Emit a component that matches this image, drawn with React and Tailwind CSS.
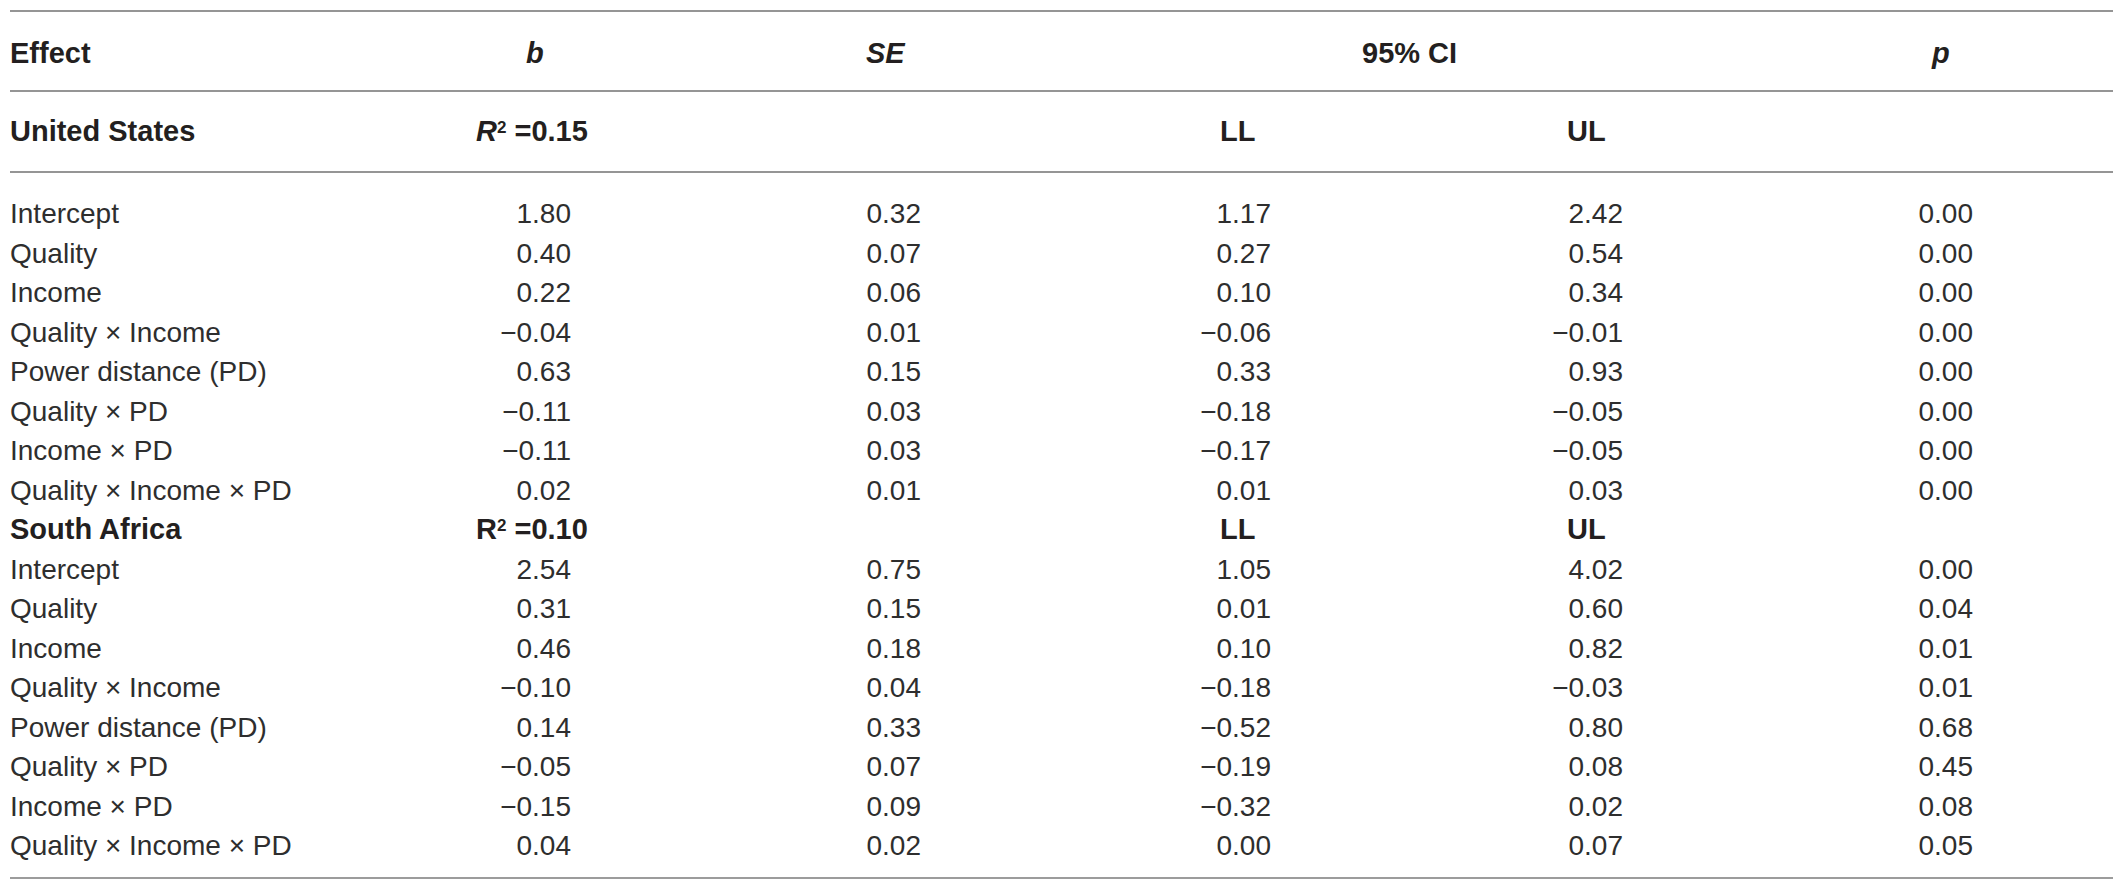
// Regression table: moderated effects by country
const COLS = "grid grid-cols-[411px_150px_350px_350px_352px_350px_140px]";

const US_ROWS = [
  ["Intercept", "1.80", "0.32", "1.17", "2.42", "0.00"],
  ["Quality", "0.40", "0.07", "0.27", "0.54", "0.00"],
  ["Income", "0.22", "0.06", "0.10", "0.34", "0.00"],
  ["Quality × Income", "−0.04", "0.01", "−0.06", "−0.01", "0.00"],
  ["Power distance (PD)", "0.63", "0.15", "0.33", "0.93", "0.00"],
  ["Quality × PD", "−0.11", "0.03", "−0.18", "−0.05", "0.00"],
  ["Income × PD", "−0.11", "0.03", "−0.17", "−0.05", "0.00"],
  ["Quality × Income × PD", "0.02", "0.01", "0.01", "0.03", "0.00"],
];

const SA_ROWS = [
  ["Intercept", "2.54", "0.75", "1.05", "4.02", "0.00"],
  ["Quality", "0.31", "0.15", "0.01", "0.60", "0.04"],
  ["Income", "0.46", "0.18", "0.10", "0.82", "0.01"],
  ["Quality × Income", "−0.10", "0.04", "−0.18", "−0.03", "0.01"],
  ["Power distance (PD)", "0.14", "0.33", "−0.52", "0.80", "0.68"],
  ["Quality × PD", "−0.05", "0.07", "−0.19", "0.08", "0.45"],
  ["Income × PD", "−0.15", "0.09", "−0.32", "0.02", "0.08"],
  ["Quality × Income × PD", "0.04", "0.02", "0.00", "0.07", "0.05"],
];

function DataRow({ row }) {
  const [label, ...nums] = row;
  return (
    <div className={`${COLS} h-[39.5px] leading-[39.5px] text-[28px] text-[#2e2e2e]`}>
      <div className="whitespace-nowrap">{label}</div>
      {nums.map((n, i) => (
        <div key={i} className="text-right whitespace-nowrap">
          {n}
        </div>
      ))}
      <div />
    </div>
  );
}

function RSquared({ value, italic }) {
  return (
    <span className="whitespace-nowrap">
      <span className={italic ? "italic" : ""}>R</span>
      <sup className="text-[17px]">2</sup> ={value}
    </span>
  );
}

export default function App() {
  return (
    <div className="min-h-screen bg-white pl-[10px] pt-[10px] font-['Liberation_Sans',Arial,sans-serif]">
      <div className="w-[2103px]">
        {/* column heads */}
        <div className={`${COLS} h-[82px] border-y-2 border-[#959595] text-[29px] font-bold text-[#231f20]`}>
          <div className="pt-[4px] leading-[74px]">Effect</div>
          <div className="pt-[4px] pl-[105px] leading-[74px] italic">b</div>
          <div className="pt-[4px] pl-[295px] leading-[74px] italic">SE</div>
          <div />
          <div className="pt-[4px] pl-[91px] leading-[74px] whitespace-nowrap">95% CI</div>
          <div className="pt-[4px] pl-[309px] leading-[74px] italic">p</div>
          <div />
        </div>

        {/* United States sub-head */}
        <div className={`${COLS} h-[81px] border-b-2 border-[#959595] text-[29px] font-bold text-[#231f20]`}>
          <div className="leading-[79px] whitespace-nowrap">United States</div>
          <div className="pl-[55px] leading-[79px]">
            <RSquared value="0.15" italic />
          </div>
          <div />
          <div className="pl-[299px] leading-[79px]">LL</div>
          <div className="pl-[296px] leading-[79px]">UL</div>
          <div />
          <div />
        </div>

        <div className="pt-[21px] pb-[11px] border-b-2 border-[#9c9c9c]">
          {US_ROWS.map((r) => (
            <DataRow key={"us" + r[0]} row={r} />
          ))}

          <div className={`${COLS} h-[39.5px] leading-[39.5px] text-[29px] font-bold text-[#231f20]`}>
            <div className="whitespace-nowrap">South Africa</div>
            <div className="pl-[55px]">
              <RSquared value="0.10" />
            </div>
            <div />
            <div className="pl-[299px]">LL</div>
            <div className="pl-[296px]">UL</div>
            <div />
            <div />
          </div>

          {SA_ROWS.map((r) => (
            <DataRow key={"sa" + r[0]} row={r} />
          ))}
        </div>
      </div>
    </div>
  );
}
